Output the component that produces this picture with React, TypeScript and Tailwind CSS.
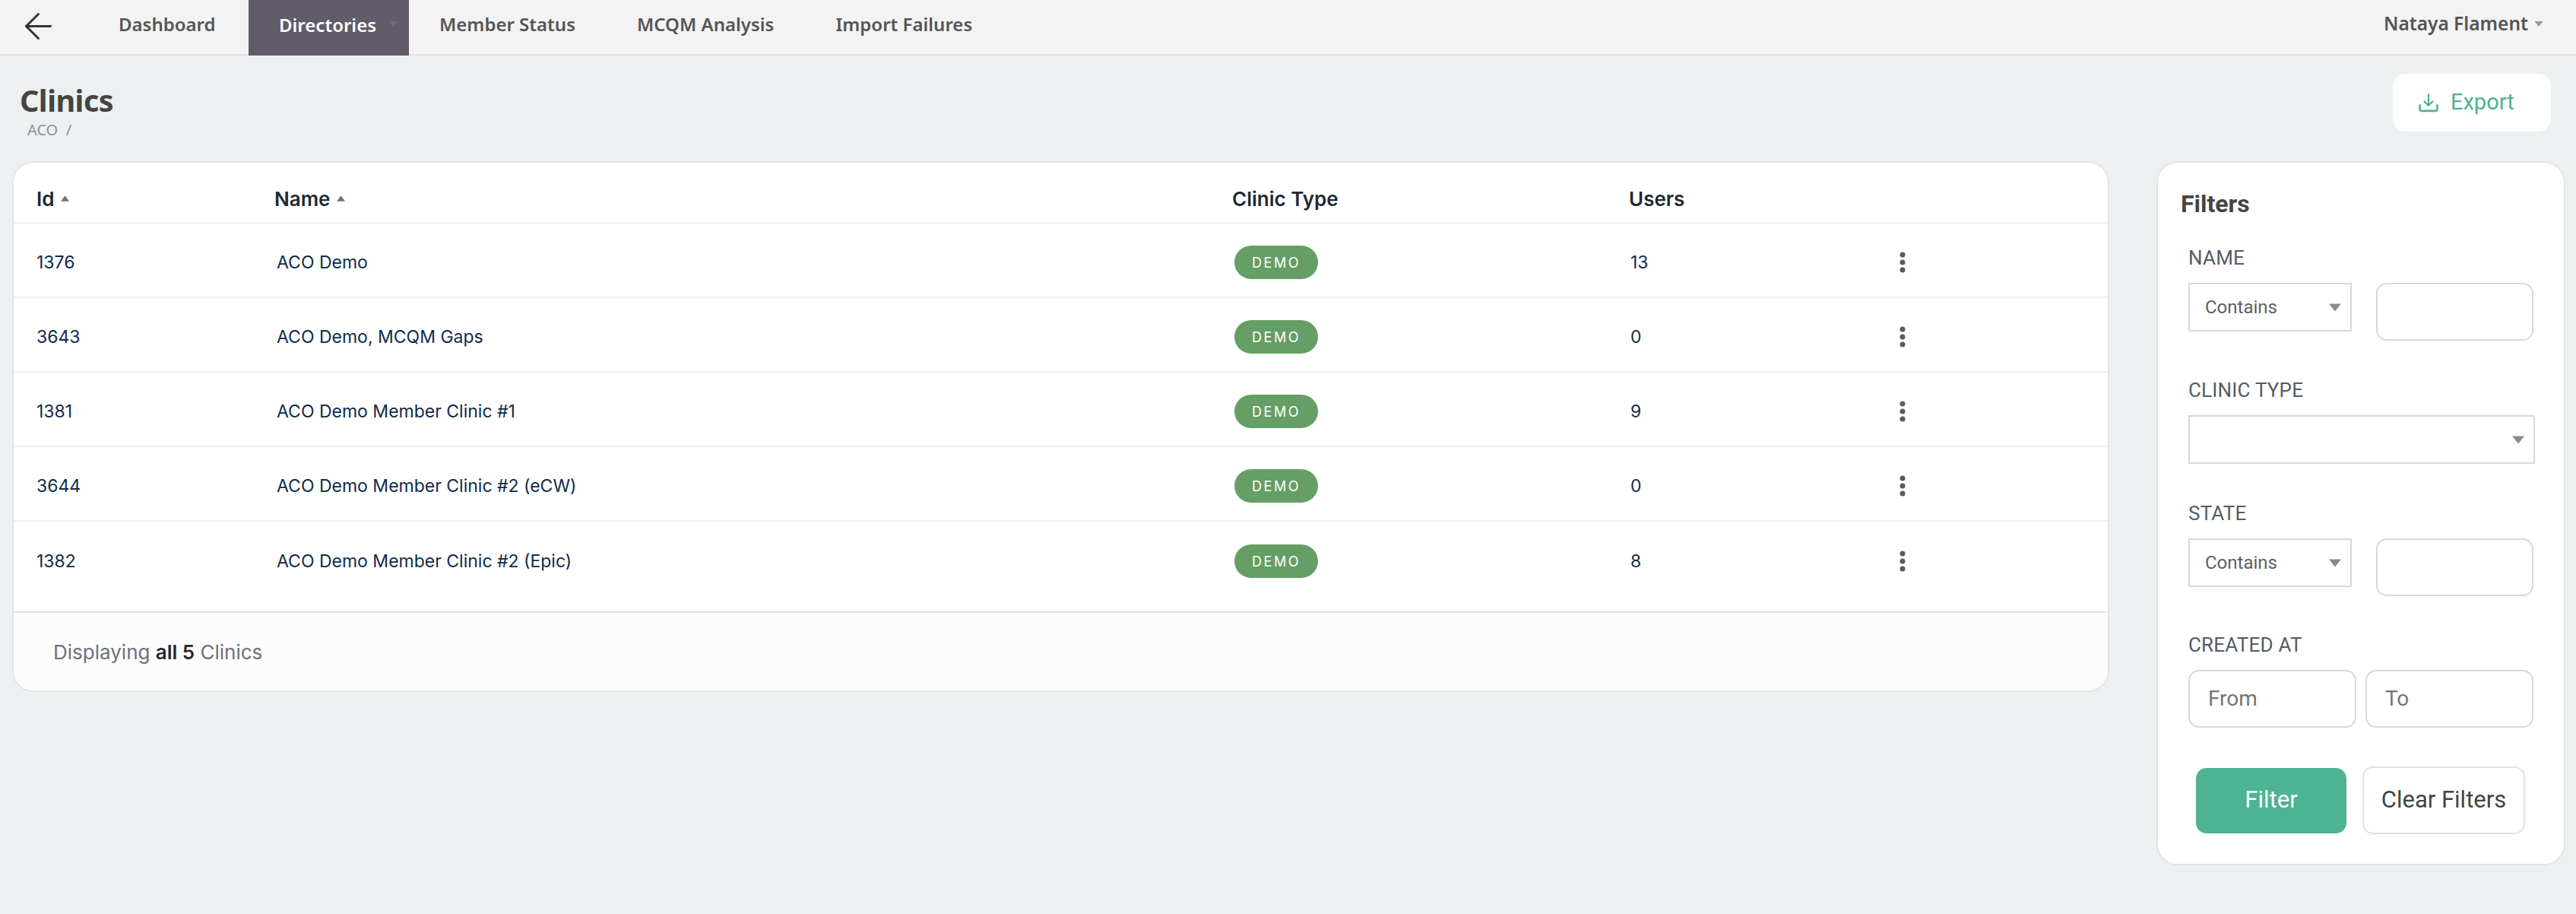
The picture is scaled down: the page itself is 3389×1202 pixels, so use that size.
import { ArrowLeft } from "lucide-react";

const clinics = [
  { id: 1376, name: "ACO Demo", users: 13 },
  { id: 3643, name: "ACO Demo, MCQM Gaps", users: 0 },
  { id: 1381, name: "ACO Demo Member Clinic #1", users: 9 },
  { id: 3644, name: "ACO Demo Member Clinic #2 (eCW)", users: 0 },
  { id: 1382, name: "ACO Demo Member Clinic #2 (Epic)", users: 8 },
];

const navFont = "font-['Noto_Sans',sans-serif]";
const bodyFont = "font-['Inter',sans-serif]";
const formFont = "font-['Roboto',sans-serif]";

function Caret({ className }: { className: string }) {
  return (
    <svg viewBox="0 0 16 10" className={className}>
      <polygon points="0,0 16,0 8,10" fill="currentColor" />
    </svg>
  );
}

function SortUp() {
  return (
    <svg viewBox="0 0 12 8" className="w-[11px] h-[8px] text-[#6b7280]">
      <polygon points="6,0 12,8 0,8" fill="currentColor" />
    </svg>
  );
}

function Dots() {
  return (
    <svg viewBox="0 0 8 28" className="w-[8px] h-[28px] text-[#555b61]">
      <circle cx="4" cy="4" r="3.5" fill="currentColor" />
      <circle cx="4" cy="14" r="3.5" fill="currentColor" />
      <circle cx="4" cy="24" r="3.5" fill="currentColor" />
    </svg>
  );
}

function SelectBox({ label, className }: { label?: string; className: string }) {
  return (
    <div className={`flex items-center justify-between border-2 border-[#d5d9de] pl-[20px] pr-[12px] bg-white ${className}`}>
      <span className="text-[24px] text-[#5b6168]">{label}</span>
      <Caret className="w-[16px] h-[11px] text-[#8a8a8a]" />
    </div>
  );
}

function FilterLabel({ children }: { children: string }) {
  return <div className="text-[26px] leading-[30px] text-[#555b63] tracking-[0.2px]">{children}</div>;
}

function TextBox({ placeholder, className }: { placeholder?: string; className: string }) {
  return (
    <div className={`flex items-center border-2 border-[#d5d9de] rounded-[14px] bg-white pl-[24px] text-[28px] text-[#757575] ${className}`}>
      {placeholder}
    </div>
  );
}

export default function App() {
  return (
    <div className={`min-h-screen bg-[#ecf0f1] ${bodyFont}`}>
      {/* Top nav */}
      <nav className={`h-[73px] flex items-stretch bg-[#f3f3f3] border-b-2 border-[#e2e2e2] ${navFont}`}>
        <div className="w-[327px] flex items-center">
          <ArrowLeft size={55} strokeWidth={1.3} className="text-[#333] ml-[23px] mr-[78px] shrink-0 -mt-[2px]" />
          <span className="text-[24px] font-semibold text-[#555] whitespace-nowrap pb-[8px]">Dashboard</span>
        </div>
        <div className="w-[211px] h-[73px] bg-[#625b68] flex items-center pl-[40px] pb-[8px] relative">
          <span className="text-[24px] font-semibold text-white">Directories</span>
          <Caret className="absolute left-[185px] top-[28px] w-[11px] h-[7px] text-[#726b78]" />
        </div>
        <div className="flex items-center pl-[40px] pb-[8px] gap-[81px] text-[24px] font-semibold text-[#555]">
          <span>Member Status</span>
          <span>MCQM Analysis</span>
          <span>Import Failures</span>
        </div>
        <div className="ml-auto flex items-center pr-[43px] pb-[8px] gap-[8px] text-[24.500px] font-semibold text-[#555]">
          <span>Nataya Flament</span>
          <Caret className="w-[12px] h-[7px] text-[#999]" />
        </div>
      </nav>

      {/* Page header */}
      <div className="h-[139px] flex justify-between items-start pl-[26px] pr-[33px]">
        <div className={`${navFont} pt-[33px]`}>
          <h1 className="text-[39.500px] leading-[52px] font-bold tracking-[-0.5px] text-[#444]">Clinics</h1>
          <div className="text-[20px] leading-[24px] text-[#8b929a] pl-[10px] mt-[1px]">ACO&nbsp;&nbsp;/</div>
        </div>
        <button className={`mt-[24px] w-[208px] h-[76px] bg-white rounded-[16px] flex items-center pl-[34px] gap-[16px] text-[#4db393] text-[29px] ${formFont}`}>
          <svg viewBox="0 0 24 24" className="w-[26px] h-[26px]" fill="none" stroke="currentColor" strokeWidth="2" strokeLinecap="round" strokeLinejoin="round">
            <path d="M12 2v13M7 10.5l5 5 5-5" />
            <path d="M1.500 15v5a2 2 0 0 0 2 2h17a2 2 0 0 0 2-2v-5" strokeWidth="2.400" />
          </svg>
          Export
        </button>
      </div>

      <div className="flex items-start gap-[62px] pl-[16px] pr-[14px]">
        {/* Table card */}
        <div className="flex-1 bg-white border-2 border-[#e2e4e6] rounded-[28px] overflow-hidden">
          <div className="h-[80px] flex items-center pl-[30px] pt-[16px] border-b-2 border-[#eff0f1] text-[26px] font-semibold text-[#1f2933]">
            <div className="w-[313px] flex items-center gap-[9px]">Id <SortUp /></div>
            <div className="w-[1260px] flex items-center gap-[9px]">Name <SortUp /></div>
            <div className="w-[522px]">Clinic Type</div>
            <div>Users</div>
          </div>
          {clinics.map((c, i) => (
            <div key={c.id} className={`h-[98px] flex items-center pl-[30px] pt-[6px] text-[23px] text-[#0f2c4a] ${i < clinics.length - 1 ? "border-b-2 border-[#eff0f1]" : ""}`}>
              <div className="w-[313px]">{c.id}</div>
              <div className="w-[1260px] pl-[3px]">{c.name}</div>
              <div className="w-[522px] pl-[3px]">
                <span className="inline-flex items-center justify-center w-[110px] h-[44px] rounded-full bg-[#659f65] text-white text-[18px] tracking-[2.500px]">DEMO</span>
              </div>
              <div className="w-[356px] pl-[2px]">{c.users}</div>
              <Dots />
            </div>
          ))}
          <div className="h-[104px] mt-[20px] flex items-center pl-[52px] bg-[#fcfcfc] border-t-2 border-[#e0e2e4] text-[26px] text-[#6b7280]">
            <span>Displaying <b className="font-semibold text-[#1f2933]">all 5</b> Clinics</span>
          </div>
        </div>

        {/* Filters */}
        <aside className={`w-[538px] h-[926px] bg-white border-2 border-[#e2e4e6] rounded-[28px] pl-[40px] pr-[40px] ${formFont}`}>
          <h2 className="mt-[34px] -ml-[10px] text-[32px] leading-[40px] font-bold text-[#444]">Filters</h2>
          <div className="mt-[36px]"><FilterLabel>NAME</FilterLabel></div>
          <div className="mt-[18px] flex items-start gap-[32px]">
            <SelectBox label="Contains" className="w-[216px] h-[64px]" />
            <TextBox className="w-[208px] h-[76px]" />
          </div>
          <div className="mt-[50px]"><FilterLabel>CLINIC TYPE</FilterLabel></div>
          <div className="mt-[18px]"><SelectBox className="w-[456px] h-[64px]" /></div>
          <div className="mt-[50px]"><FilterLabel>STATE</FilterLabel></div>
          <div className="mt-[18px] flex items-start gap-[32px]">
            <SelectBox label="Contains" className="w-[216px] h-[64px]" />
            <TextBox className="w-[208px] h-[76px]" />
          </div>
          <div className="mt-[49px]"><FilterLabel>CREATED AT</FilterLabel></div>
          <div className="mt-[18px] flex gap-[12px]">
            <TextBox placeholder="From" className="w-[222px] h-[76px]" />
            <TextBox placeholder="To" className="w-[222px] h-[76px]" />
          </div>
          <div className="mt-[51px] ml-[10px] flex items-center gap-[21px]">
            <button className="w-[198px] h-[86px] rounded-[14px] bg-[#4db393] text-white text-[31px]">Filter</button>
            <button className="w-[214px] h-[89px] rounded-[14px] border-2 border-[#dfe1e4] bg-white text-[#444] text-[31px]">Clear Filters</button>
          </div>
        </aside>
      </div>
    </div>
  );
}
